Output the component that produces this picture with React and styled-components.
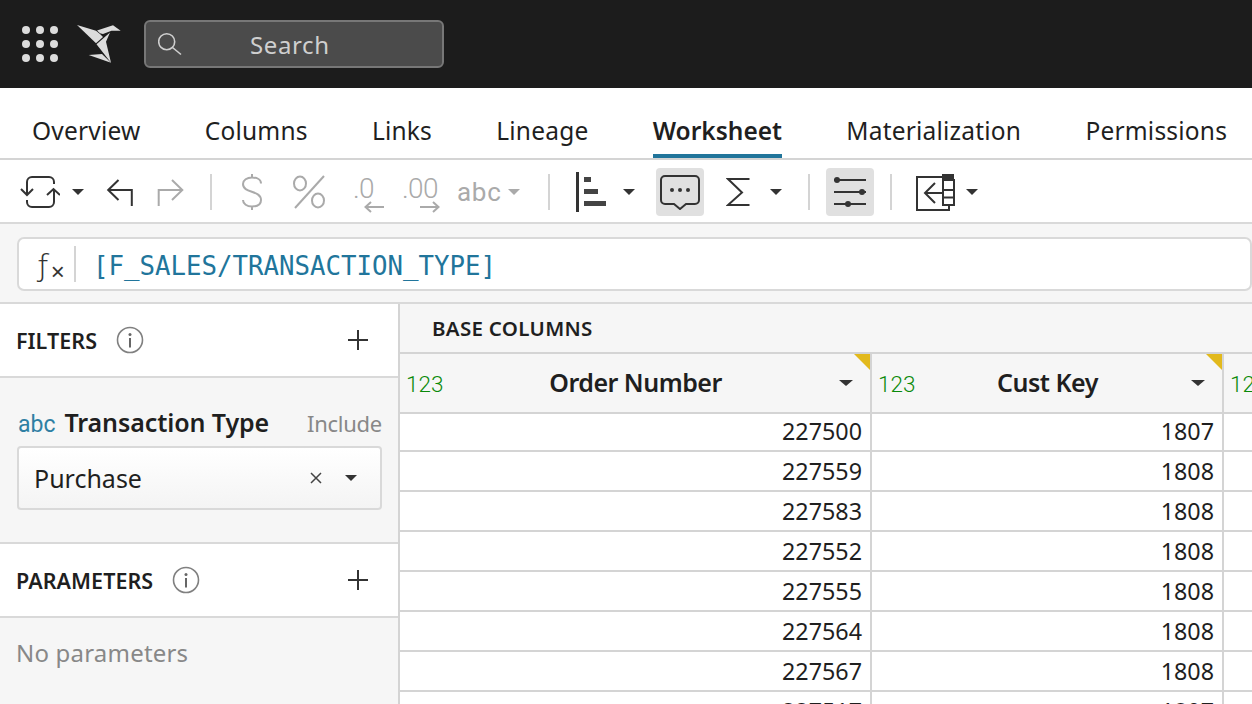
import React from 'react';
import styled, { createGlobalStyle } from 'styled-components';

const GlobalStyle = createGlobalStyle`
  html, body {
    margin: 0;
    height: 100%;
    overflow: hidden;
    background: #fff;
  }
  * {
    box-sizing: border-box;
  }
`;

const Page = styled.div`
  width: 1252px;
  height: 704px;
  overflow: hidden;
  display: flex;
  flex-direction: column;
  font-family: 'Noto Sans', sans-serif;
  color: #1f1f1f;
`;

const TopBar = styled.header`
  height: 88px;
  flex: none;
  display: flex;
  align-items: center;
  padding-left: 22px;
  background: #1c1c1c;
`;

const Logo = styled.svg`
  margin-left: 18px;
  margin-right: 22px;
  display: block;
`;

const SearchBox = styled.div`
  width: 300px;
  height: 48px;
  display: flex;
  align-items: center;
  padding-left: 12px;
  background: #4b4b4b;
  border: 2px solid #777;
  border-radius: 6px;
  color: #cfcfcf;
  font-size: 24px;
  letter-spacing: 0.6px;
`;

const SearchLabel = styled.span`
  margin-left: 68px;
`;

const Tabs = styled.nav`
  height: 72px;
  flex: none;
  display: flex;
  gap: 64.25px;
  padding-left: 32px;
  border-bottom: 2px solid #d4d4d4;
`;

const Tab = styled.div`
  height: 70px;
  line-height: 85px;
  font-size: 24.5px;
  font-weight: ${(p) => (p.$active ? 600 : 400)};
  letter-spacing: ${(p) => (p.$active ? '0' : '0.2px')};
  white-space: nowrap;
  border-bottom: 4px solid ${(p) => (p.$active ? '#21759b' : 'transparent')};
`;

const Toolbar = styled.div`
  height: 64px;
  flex: none;
  display: flex;
  align-items: center;
  padding: 2px 0 0 20px;
  border-bottom: 2px solid #d9d9d9;
`;

const Tool = styled.div`
  flex: none;
  display: flex;
  align-items: center;
  margin-left: ${(p) => p.$left || 0}px;
`;

const ToolPressed = styled(Tool)`
  width: 48px;
  height: 48px;
  justify-content: center;
  background: #e0e0e0;
  border-radius: 4px;
`;

const Divider = styled.div`
  flex: none;
  width: 2px;
  height: 36px;
  margin-left: ${(p) => p.$left}px;
  background: #d4d4d4;
`;

const Caret = styled.span`
  flex: none;
  width: 0;
  height: 0;
  margin-left: ${(p) => p.$left || 0}px;
  border-left: ${(p) => p.$size || 6.5}px solid transparent;
  border-right: ${(p) => p.$size || 6.5}px solid transparent;
  border-top: ${(p) => (p.$size || 6.5) - 0.5}px solid ${(p) => p.$color || '#333'};
`;

const Decimal = styled.div`
  flex: none;
  width: ${(p) => p.$width}px;
  height: 44px;
  display: flex;
  flex-direction: column;
  align-items: flex-end;
  padding-top: 6px;
  margin-left: ${(p) => p.$left}px;
  color: #aaa;
  font-family: Roboto, sans-serif;
  font-weight: 300;
  font-size: 28px;
  line-height: 25px;
`;

const DecimalText = styled.span`
  align-self: flex-start;
  letter-spacing: -0.6px;
`;

const AbcText = styled.span`
  display: block;
  width: 44px;
  color: #aaa;
  font-family: Roboto, sans-serif;
  font-size: 26px;
  letter-spacing: 0.7px;
`;

const FormulaBar = styled.div`
  height: 80px;
  flex: none;
  display: flex;
  align-items: flex-start;
  padding: 13px 0 0 17px;
  background: #f6f6f6;
  border-bottom: 2px solid #d9d9d9;
`;

const FormulaInput = styled.div`
  width: 1260px;
  height: 54px;
  display: flex;
  align-items: center;
  background: #fff;
  border: 2px solid #d9d9d9;
  border-radius: 7px;
`;

const FxLabel = styled.span`
  width: 57px;
  height: 36px;
  flex: none;
  display: flex;
  align-items: baseline;
  padding-left: 15px;
  border-right: 2px solid #d4d4d4;
  font-family: 'Open Sans', sans-serif;
  font-weight: 300;
  font-size: 31px;
  line-height: 34px;
  color: #333;
`;

const FxSmall = styled.span`
  align-self: flex-end;
  margin-left: -1px;
  font-family: 'Liberation Sans', sans-serif;
  font-size: 24px;
  line-height: 20px;
`;

const FormulaText = styled.span`
  margin-top: 3px;
  margin-left: 17px;
  font-family: 'DejaVu Sans Mono', monospace;
  font-size: 25.75px;
  color: #21759b;
`;

const Main = styled.div`
  flex: 1;
  min-height: 0;
  display: flex;
`;

const Sidebar = styled.aside`
  width: 400px;
  flex: none;
  display: flex;
  flex-direction: column;
  background: #f6f6f6;
  border-right: 2px solid #d4d4d4;
`;

const SectionHead = styled.div`
  height: 74px;
  flex: none;
  display: flex;
  align-items: center;
  padding: 0 29px 0 16px;
  background: #fff;
  border-bottom: 2px solid #d9d9d9;
`;

const SectionTitle = styled.h3`
  margin: 0 19px 0 0;
  font-size: 21.5px;
  font-weight: 600;
  letter-spacing: 0.05px;
`;

const PlusIcon = styled.svg`
  margin-left: auto;
  display: block;
`;

const FilterPanel = styled.div`
  height: 166px;
  flex: none;
  padding: 27px 16px 0 17px;
  border-bottom: 2px solid #d9d9d9;
`;

const FilterTitleRow = styled.div`
  display: flex;
  align-items: baseline;
  height: 41px;
`;

const TypeTag = styled.span`
  margin-left: 1px;
  font-family: Roboto, sans-serif;
  font-size: 23px;
  color: #2f7fa3;
`;

const FilterName = styled.span`
  margin-left: 9px;
  font-size: 25px;
  font-weight: 600;
  letter-spacing: -0.1px;
`;

const FilterMode = styled.span`
  margin-left: auto;
  font-size: 22px;
  letter-spacing: -0.25px;
  color: #888;
`;

const SelectBox = styled.div`
  height: 64px;
  display: flex;
  align-items: center;
  padding: 0 23px 0 15px;
  background: linear-gradient(#fff, #f4f4f4);
  border: 2px solid #d9d9d9;
  border-radius: 4px;
  font-size: 25px;
`;

const ClearIcon = styled.svg`
  margin-left: auto;
  margin-right: 22px;
  display: block;
`;

const EmptyText = styled.div`
  padding: 18px 16px;
  font-size: 24px;
  letter-spacing: 0.2px;
  color: #888;
`;

const Table = styled.section`
  flex: 1;
  min-width: 0;
  overflow: hidden;
`;

const GroupHead = styled.div`
  height: 50px;
  display: flex;
  align-items: center;
  padding: 0 0 0 32px;
  background: #f6f6f6;
  border-bottom: 2px solid #d4d4d4;
  font-size: 20.5px;
  font-weight: 600;
  letter-spacing: 0.3px;
`;

const Columns = styled.div`
  display: grid;
  grid-template-columns: 472px 352px 100px;
  height: ${(p) => p.$height}px;
  background: ${(p) => p.$bg};
  border-bottom: 2px solid #d4d4d4;
`;

const HeadCell = styled.div`
  position: relative;
  display: flex;
  align-items: center;
  padding: 0 17px 0 6px;
  border-right: 2px solid #d4d4d4;
`;

const NumTag = styled.span`
  flex: none;
  width: 38px;
  padding-top: 1px;
  font-family: Roboto, sans-serif;
  font-weight: 300;
  font-size: 22.5px;
  color: #0a8a0a;
`;

const HeadName = styled.span`
  flex: 1;
  padding: 0 12px 2px 0;
  text-align: center;
  font-size: 25px;
  font-weight: 600;
  letter-spacing: -0.5px;
`;

const Flag = styled.span`
  position: absolute;
  top: 0;
  right: 0;
  width: 0;
  height: 0;
  border-top: 16px solid #e2b91c;
  border-left: 16px solid transparent;
`;

const Cell = styled.div`
  padding: 0 8px 0 0;
  text-align: right;
  font-size: 23.3px;
  line-height: ${(p) => p.$line}px;
  border-right: 2px solid #d4d4d4;
  overflow: hidden;
`;

const rows = [
  ['227500', '1807'],
  ['227559', '1808'],
  ['227583', '1808'],
  ['227552', '1808'],
  ['227555', '1808'],
  ['227564', '1808'],
  ['227567', '1808'],
  ['227517', '1807'],
];

const stroke = { fill: 'none', stroke: '#333', strokeWidth: 2 };
const grey = { fill: 'none', stroke: '#aaa', strokeWidth: 2 };

const InfoIcon = () => (
  <svg width="28" height="28" viewBox="0 0 28 28">
    <circle cx="14" cy="14" r="12.5" fill="none" stroke="#808080" strokeWidth="1.6" />
    <circle cx="14" cy="8.5" r="1.5" fill="#666" />
    <path d="M14 12v9.5" stroke="#666" strokeWidth="2" />
  </svg>
);

const Plus = () => (
  <PlusIcon width="22" height="22" viewBox="0 0 22 22">
    <path d="M11 1v20M1 11h20" {...stroke} />
  </PlusIcon>
);

function App() {
  return (
    <Page>
      <GlobalStyle />
      <TopBar>
        <svg width="36" height="36" viewBox="0 0 36 36">
          {[4, 18, 32].map((y) =>
            [4, 18, 32].map((x) => <circle key={`${x}-${y}`} cx={x} cy={y} r="4" fill="#dcdcdc" />)
          )}
        </svg>
        <Logo width="46" height="40" viewBox="0 0 46 40">
          <g fill="#dcdcdc">
            <path d="M1 1 20 6.700l4 3.300 3 3L20 19.300z" />
            <path d="M21 6.500 37 1.300l7.700 5.400h-9.200L27 10l-3-.8z" />
            <path d="M20.500 20.300 34 8.500 30 17.700l5 21z" />
            <path d="M12.700 31 26 30l9 8.700z" />
          </g>
        </Logo>
        <SearchBox>
          <svg width="24" height="24" viewBox="0 0 24 24">
            <circle cx="8.700" cy="9.700" r="8" fill="none" stroke="#cfcfcf" strokeWidth="1.6" />
            <path d="M14.500 15.500 23 22.500" stroke="#cfcfcf" strokeWidth="1.6" fill="none" />
          </svg>
          <SearchLabel>Search</SearchLabel>
        </SearchBox>
      </TopBar>

      <Tabs>
        <Tab>Overview</Tab>
        <Tab>Columns</Tab>
        <Tab>Links</Tab>
        <Tab>Lineage</Tab>
        <Tab $active>Worksheet</Tab>
        <Tab>Materialization</Tab>
        <Tab>Permissions</Tab>
      </Tabs>

      <Toolbar>
        <Tool>
          <svg width="40" height="32" viewBox="0 0 40 32">
            <path d="M7 18V6a5 5 0 0 1 5-5h17a5 5 0 0 1 5 5v2M7 24v2a5 5 0 0 0 5 5h17a5 5 0 0 0 5-5V14" {...stroke} />
            <path d="M1 13l6 6 6-6M27 19l6.500-6 6.500 6" {...stroke} />
          </svg>
        </Tool>
        <Caret $left={12} />
        <Tool $left={22}>
          <svg width="28" height="36" viewBox="0 0 28 36">
            <path d="M12.500 6 2.200 16 12.500 26M2.200 16H25.800V32" {...stroke} />
          </svg>
        </Tool>
        <Tool $left={23}>
          <svg width="28" height="36" viewBox="0 0 28 36">
            <path d="M15 6 25.300 16 15 26M25.300 16H1.700V32" {...grey} />
          </svg>
        </Tool>
        <Divider $left={25} />
        <Tool $left={29}>
          <svg width="22" height="36" viewBox="0 0 22 36">
            <path d="M20 9.500c0-4-4-6-9-6s-9 2.500-9 6.500c0 9.500 18 6 18 16 0 4.500-4 6.500-9 6.500s-9-2.500-9-6.500M11 0v3.500M11 32.500v3.500" {...grey} />
          </svg>
        </Tool>
        <Tool $left={28}>
          <svg width="36" height="34" viewBox="0 0 36 34">
            <ellipse cx="9" cy="8.500" rx="6" ry="7" {...grey} />
            <ellipse cx="27" cy="25.500" rx="6" ry="7" {...grey} />
            <path d="M33 1 4 33" {...grey} />
          </svg>
        </Tool>
        <Decimal $left={26} $width={31}>
          <DecimalText>.0</DecimalText>
          <svg width="20" height="12" viewBox="0 0 20 12">
            <path d="M20 6H1.500M7 1 1.500 6 7 11" {...grey} />
          </svg>
        </Decimal>
        <Decimal $left={18} $width={38}>
          <DecimalText>.00</DecimalText>
          <svg width="20" height="12" viewBox="0 0 20 12">
            <path d="M0 6h18.500M13 1l5.500 5L13 11" {...grey} />
          </svg>
        </Decimal>
        <Tool $left={17}>
          <AbcText>abc</AbcText>
        </Tool>
        <Caret $left={7} $color="#aaa" />
        <Divider $left={28} />
        <Tool $left={26}>
          <svg width="32" height="40" viewBox="0 0 32 40">
            <path d="M1.500 0v40" stroke="#333" strokeWidth="3" />
            <path d="M8 5h7v5H8zM8 17h14v5H8zM8 29h22v5H8z" fill="#444" />
          </svg>
        </Tool>
        <Caret $left={15} />
        <ToolPressed $left={21}>
          <svg width="42" height="36" viewBox="0 0 42 36">
            <path d="M6 2h30a4 4 0 0 1 4 4v20a4 4 0 0 1-4 4H27l-6 5-6-5H6a4 4 0 0 1-4-4V6a4 4 0 0 1 4-4z" {...stroke} />
            <circle cx="13" cy="16" r="2" fill="#333" />
            <circle cx="21" cy="16" r="2" fill="#333" />
            <circle cx="29" cy="16" r="2" fill="#333" />
          </svg>
        </ToolPressed>
        <Tool $left={22}>
          <svg width="24" height="30" viewBox="0 0 24 30">
            <path d="M23.500 2H2l14 13.500L2 28h21.500" {...stroke} />
          </svg>
        </Tool>
        <Caret $left={20} />
        <Divider $left={26} />
        <ToolPressed $left={16}>
          <svg width="34" height="30" viewBox="0 0 34 30">
            <path d="M1 3h32M1 15h32M1 27h32" {...stroke} />
            <circle cx="4" cy="3" r="3" fill="#333" />
            <circle cx="29" cy="15" r="3" fill="#333" />
            <circle cx="15" cy="27" r="3" fill="#333" />
          </svg>
        </ToolPressed>
        <Divider $left={16} />
        <Tool $left={23}>
          <svg width="42" height="38" viewBox="0 0 42 38">
            <path d="M27 4H2v33h32v-4" {...stroke} />
            <path d="M20 10 10 20l10 10M10 20h17" {...stroke} />
            <path d="M27 1h12v7H27z" fill="#333" />
            <path d="M28 7h11v25H28zM28 17h11M28 24.500h11" {...stroke} />
          </svg>
        </Tool>
        <Caret $left={9} />
      </Toolbar>

      <FormulaBar>
        <FormulaInput>
          <FxLabel>
            ƒ<FxSmall>×</FxSmall>
          </FxLabel>
          <FormulaText>[F_SALES/TRANSACTION_TYPE]</FormulaText>
        </FormulaInput>
      </FormulaBar>

      <Main>
        <Sidebar>
          <SectionHead>
            <SectionTitle>FILTERS</SectionTitle>
            <InfoIcon />
            <Plus />
          </SectionHead>
          <FilterPanel>
            <FilterTitleRow>
              <TypeTag>abc</TypeTag>
              <FilterName>Transaction Type</FilterName>
              <FilterMode>Include</FilterMode>
            </FilterTitleRow>
            <SelectBox>
              Purchase
              <ClearIcon width="14" height="14" viewBox="0 0 14 14">
                <path d="M2 2l10 10M12 2 2 12" fill="none" stroke="#444" strokeWidth="1.500" />
              </ClearIcon>
              <Caret />
            </SelectBox>
          </FilterPanel>
          <SectionHead>
            <SectionTitle>PARAMETERS</SectionTitle>
            <InfoIcon />
            <Plus />
          </SectionHead>
          <EmptyText>No parameters</EmptyText>
        </Sidebar>

        <Table>
          <GroupHead>BASE COLUMNS</GroupHead>
          <Columns $height={60} $bg="#f6f6f6">
            <HeadCell>
              <NumTag>123</NumTag>
              <HeadName>Order Number</HeadName>
              <Caret $size={7} />
              <Flag />
            </HeadCell>
            <HeadCell>
              <NumTag>123</NumTag>
              <HeadName>Cust Key</HeadName>
              <Caret $size={7} />
              <Flag />
            </HeadCell>
            <HeadCell>
              <NumTag>123</NumTag>
            </HeadCell>
          </Columns>
          {rows.map(([order, cust], i) => (
            <Columns key={order} $height={i === 0 ? 38 : 40} $bg="#fff">
              <Cell $line={i === 0 ? 35 : 38}>{order}</Cell>
              <Cell $line={i === 0 ? 35 : 38}>{cust}</Cell>
              <Cell $line={38} />
            </Columns>
          ))}
        </Table>
      </Main>
    </Page>
  );
}

export default App;
